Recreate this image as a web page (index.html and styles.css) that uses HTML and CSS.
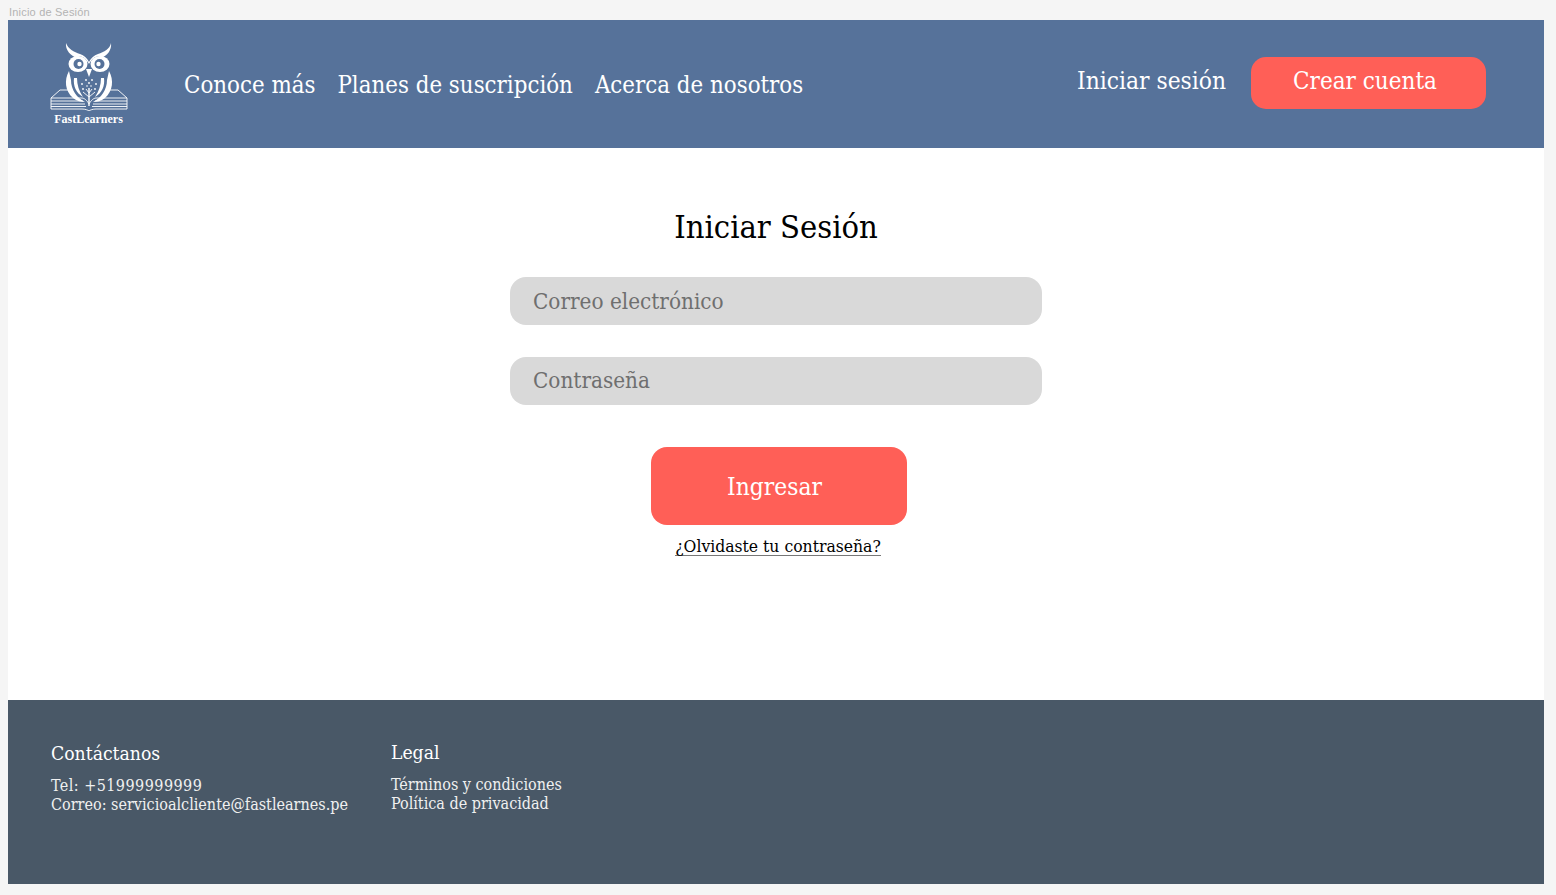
FILE: index.html
```html
<!DOCTYPE html>
<html lang="es">
<head>
<meta charset="utf-8">
<title>Inicio de Sesión</title>
<link rel="stylesheet" href="styles.css">
</head>
<body>
<div class="frame-label">Inicio de Sesión</div>
<div class="frame">
  <header class="topbar">
    <div class="logo">
      <svg class="logo-mark" viewBox="0 0 78 69" width="78" height="69" aria-hidden="true">
        <g fill="#fff">
          <path d="M16 1 C18 7 24 10 30 12 C34 13.5 37 16 39 20 C41 16 44 13.5 48 12 C54 10 60 7 61 1 C62 8 57 14 51 16 C46 12 42 17 39 22 C36 17 32 12 27 16 C21 14 15 8 16 1 Z"/>
          <ellipse cx="28" cy="22" rx="9.5" ry="8"/>
          <ellipse cx="50" cy="22" rx="9.5" ry="8"/>
          <path d="M36 27 L39 35 L42 27 Z"/>
          <path d="M19 29 C14 38 15 49 23 56 C27 59 31 60 35 60 C27 56 21 48 21 38 Z"/>
          <path d="M59 29 C64 38 63 49 55 56 C51 59 47 60 43 60 C51 56 57 48 57 38 Z"/>
          <path d="M24 36 C23 44 26 51 33 55 C29 49 27 43 27 36 Z"/>
          <path d="M54 36 C55 44 52 51 45 55 C49 49 51 43 51 36 Z"/>
          <path d="M38.3 46 h1.4 v18 h-1.4 Z"/>
        </g>
        <g fill="#56729a">
          <circle cx="28.5" cy="22" r="5"/>
          <circle cx="49.5" cy="22" r="5"/>
        </g>
        <g fill="#fff">
          <circle cx="29.5" cy="22" r="2.2"/>
          <circle cx="48.5" cy="22" r="2.2"/>
          <circle cx="32" cy="42" r=".9"/><circle cx="36" cy="38" r=".9"/><circle cx="42" cy="38" r=".9"/><circle cx="46" cy="42" r=".9"/>
          <circle cx="33" cy="47" r=".9"/><circle cx="45" cy="47" r=".9"/><circle cx="39" cy="41" r=".9"/>
          <circle cx="37" cy="44" r=".8"/><circle cx="41" cy="44" r=".8"/>
        </g>
        <g fill="none" stroke="#fff" stroke-width=".9">
          <path d="M39 55 L33 50 M39 55 L45 50 M39 51 L36 47 M39 51 L42 47"/>
          <path d="M1 56 L10 48 H18 M77 56 L68 48 H60"/>
          <path d="M1 56 H32 C35 56 38 60 39 62 C40 60 43 56 46 56 H77 V67 H46 C43 67 40 68 39 69 C38 68 35 67 32 67 H1 Z"/>
          <path d="M1 59 H33 M1 62 H35 M1 64.5 H36 M45 59 H77 M43 62 H77 M42 64.5 H77"/>
        </g>
      </svg>
      <span class="logo-name">FastLearners</span>
    </div>
    <nav class="nav">
      <a href="#">Conoce más</a>
      <a href="#">Planes de suscripción</a>
      <a href="#">Acerca de nosotros</a>
    </nav>
    <div class="account">
      <a class="signin" href="#">Iniciar sesión</a>
      <a class="signup" href="#">Crear cuenta</a>
    </div>
  </header>
  <main class="content">
    <h1 class="title">Iniciar Sesión</h1>
    <form class="form">
      <input class="field" type="email" placeholder="Correo electrónico">
      <input class="field" type="password" placeholder="Contraseña">
      <button class="submit" type="button">Ingresar</button>
    </form>
    <a class="forgot" href="#">¿Olvidaste tu contraseña?</a>
  </main>
  <footer class="footer">
    <section class="col contact">
      <h2>Contáctanos</h2>
      <p class="tel">Tel: +51999999999</p>
      <p>Correo: servicioalcliente@fastlearnes.pe</p>
    </section>
    <section class="col legal">
      <h2>Legal</h2>
      <p>Términos y condiciones</p>
      <p>Política de privacidad</p>
    </section>
  </footer>
</div>
</body>
</html>
```
FILE: styles.css
```css
* { box-sizing: border-box; }
html, body { margin: 0; height: 100%; }
body {
  background: #f5f5f5;
  font-family: "DejaVu Serif Condensed", "DejaVu Serif", serif;
  overflow: hidden;
}
.frame-label {
  height: 20px;
  padding: 6px 0 0 9px;
  font: 11px/13px "Liberation Sans", sans-serif;
  letter-spacing: 0.2px;
  color: #b3b3b3;
}
.frame {
  margin: 0 12px 0 8px;
  width: 1536px;
  height: 864px;
  display: flex;
  flex-direction: column;
  background: #fff;
}
.topbar {
  height: 128px;
  flex: none;
  display: flex;
  align-items: flex-start;
  background: #56729a;
  color: #fff;
}
.logo {
  width: 78px;
  margin: 22px 0 0 42px;
  display: flex;
  flex-direction: column;
  align-items: center;
}
.logo-mark { display: block; }
.logo-name {
  margin: 2px 0 0 -1px;
  font: 700 12px/13px "Liberation Serif", serif;
  color: #fff;
  white-space: nowrap;
}
.nav {
  display: flex;
  gap: 22px;
  margin: 49px 0 0 56px;
}
.nav a, .signin {
  color: #fff;
  text-decoration: none;
  font-size: 23.8px;
  line-height: 32px;
}
.account {
  margin: 37px 58px 0 auto;
  display: flex;
  gap: 25px;
  align-items: flex-start;
}
.signin { margin-top: 8px; font-size: 24.3px; }
.signup {
  width: 235px;
  height: 52px;
  padding: 8px 7px 0 0;
  text-align: center;
  background: #ff5f57;
  border-radius: 15px;
  color: #fff;
  text-decoration: none;
  font-size: 24px;
  line-height: 32px;
}
.content {
  flex: 1;
  display: flex;
  flex-direction: column;
  align-items: center;
  padding-top: 59px;
}
.title {
  margin: 0;
  font-size: 32.4px;
  line-height: 40px;
  font-weight: 400;
  color: #000;
}
.form {
  margin-top: 30px;
  width: 532px;
  display: flex;
  flex-direction: column;
  align-items: center;
}
.field {
  display: block;
  width: 100%;
  height: 48px;
  margin-bottom: 32px;
  padding: 0 23px;
  border: 0;
  border-radius: 16px;
  background: #d9d9d9;
  font: 22.3px "DejaVu Serif Condensed", "DejaVu Serif", serif;
}
.field::placeholder { color: #6f6f6f; opacity: 1; }
.field + .field { margin-bottom: 42px; padding-bottom: 2px; }
.submit {
  width: 256px;
  height: 78px;
  margin-left: 5px;
  padding: 0 8px 0 0;
  border: 0;
  border-radius: 16px;
  background: #ff5f57;
  color: #fff;
  font: 24.3px "DejaVu Serif Condensed", "DejaVu Serif", serif;
}
.forgot {
  margin: 12px 0 0 4px;
  font-size: 17.4px;
  line-height: 18px;
  color: #000;
  text-decoration: none;
  border-bottom: 1px solid #777;
}
.footer {
  height: 184px;
  flex: none;
  display: flex;
  gap: 43px;
  padding: 41px 0 0 43px;
  background: #495867;
  color: #fff;
}
.col h2 {
  margin: 0 0 10px;
  font-size: 19.2px;
  line-height: 25px;
  font-weight: 400;
}
.legal { margin-top: -1px; }
.legal p { font-size: 16.3px; }
.col p {
  margin: 0;
  font-size: 16px;
  line-height: 19px;
  color: #f0f0f0;
}
.col .tel { letter-spacing: 0.45px; }
```
